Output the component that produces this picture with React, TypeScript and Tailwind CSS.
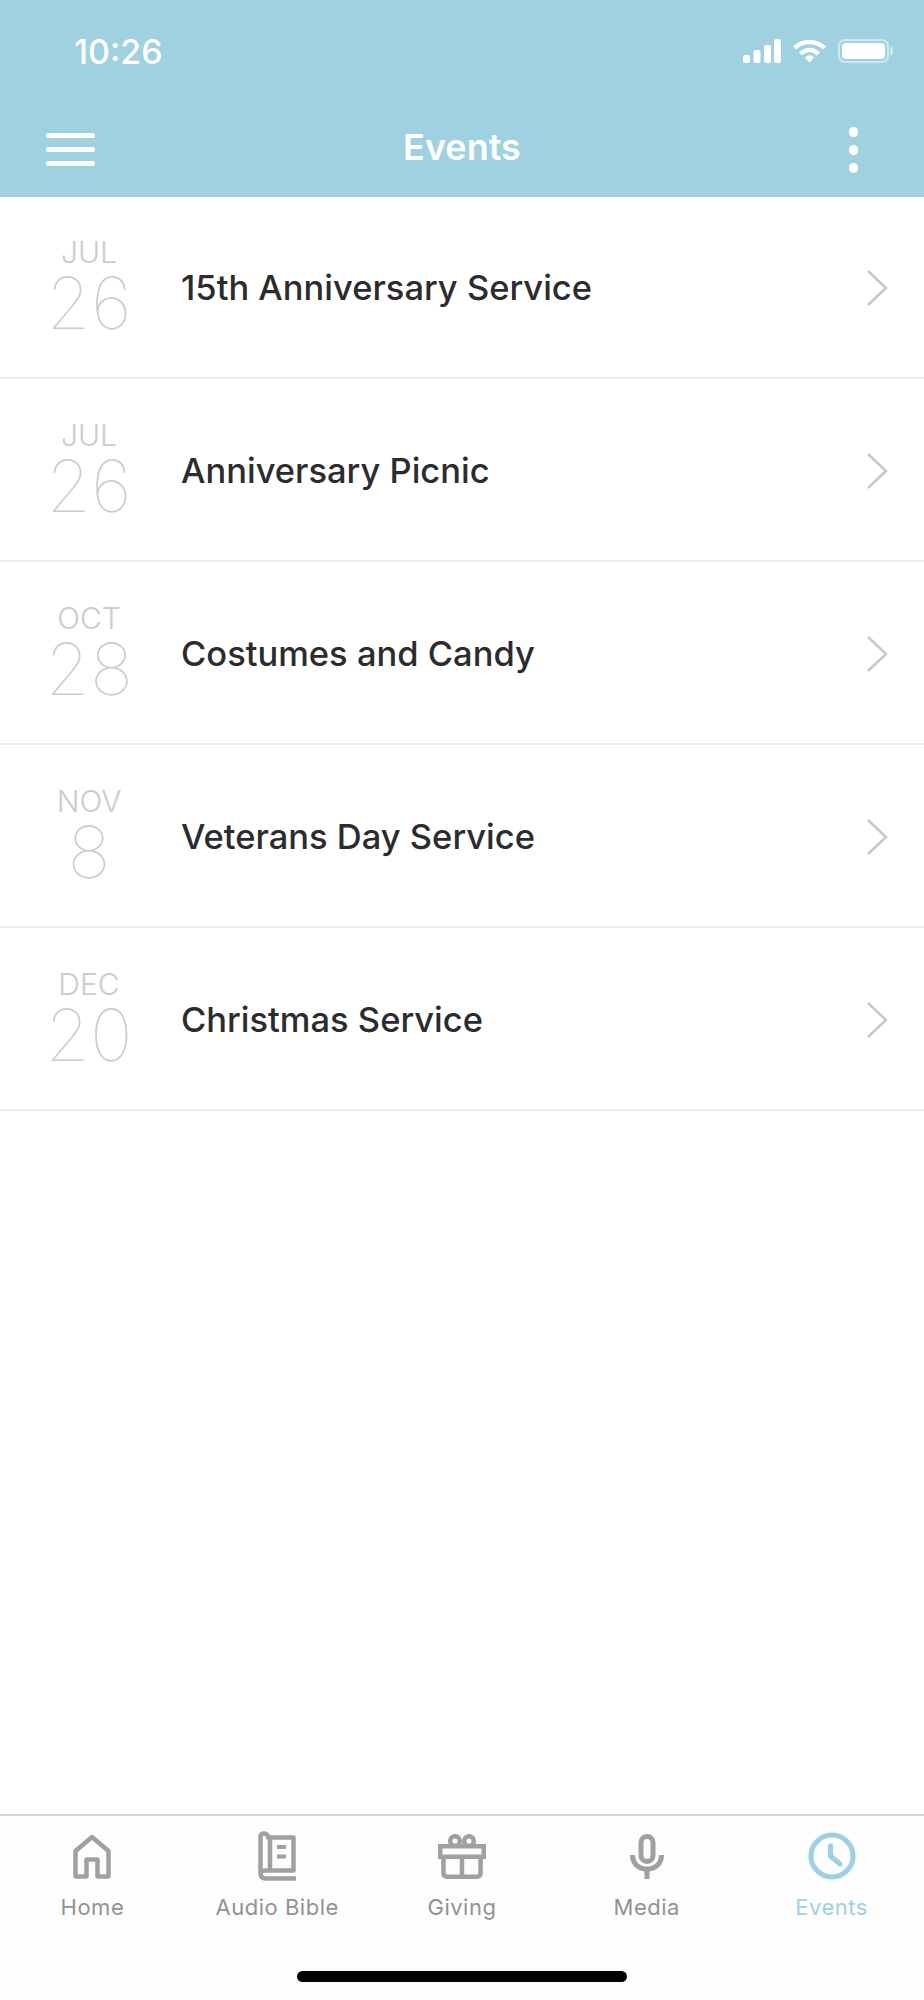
import React from 'react';

const font = { fontFamily: 'Inter, "Liberation Sans", sans-serif' };

const events = [
  { month: 'JUL', day: '26', title: '15th Anniversary Service' },
  { month: 'JUL', day: '26', title: 'Anniversary Picnic' },
  { month: 'OCT', day: '28', title: 'Costumes and Candy' },
  { month: 'NOV', day: '8', title: 'Veterans Day Service' },
  { month: 'DEC', day: '20', title: 'Christmas Service' },
];

const HomeIcon = () => (
  <svg width="38" height="45" viewBox="0 0 38 45" fill="none" stroke="currentColor" strokeWidth="4.500">
    <path d="M2.500 42.500V17L19 3L35.500 17V42.500H24.500V25.500H13.500V42.500Z" strokeLinejoin="round" />
  </svg>
);

const BookIcon = () => (
  <svg width="38" height="50" viewBox="0 0 38 50" fill="none" stroke="currentColor" strokeWidth="4.500">
    <path d="M38 47.500H8C4.500 47.500 2.500 45.500 2.500 42V6C2.500 3.500 4 2.500 6 2.500C8 2.500 10 3.500 10 6V6.500H35.500V39.500H8C4.500 39.500 2.500 41 2.500 43" strokeLinejoin="round" />
    <path d="M12 6.500V39.500" />
    <path d="M19 16H28M19 25.500H28" strokeWidth="4" />
  </svg>
);

const GiftIcon = () => (
  <svg width="48" height="45" viewBox="0 0 48 45" fill="none" stroke="currentColor" strokeWidth="4.500">
    <path d="M2.250 12.250H45.750V22.750H2.250Z" />
    <path d="M5.500 22.750V39.500C5.500 41.500 7 42.750 9 42.750H39C41 42.750 42.500 41.500 42.500 39.500V22.750" />
    <path d="M24 22.750V42.750" />
    <circle cx="17" cy="7" r="4.800" strokeWidth="4.500" />
    <circle cx="31" cy="7" r="4.800" strokeWidth="4.500" />
  </svg>
);

const MicIcon = () => (
  <svg width="34" height="45" viewBox="0 0 34 45" fill="none" stroke="currentColor" strokeWidth="5">
    <rect x="11" y="2.500" width="12" height="25" rx="6" />
    <path d="M2.500 21C2.500 29.500 8.500 35 17 35C25.500 35 31.500 29.500 31.500 21" />
    <path d="M17 35V45" />
  </svg>
);

const ClockIcon = () => (
  <svg width="48" height="48" viewBox="0 0 48 48" fill="none" stroke="currentColor" strokeWidth="5">
    <circle cx="24" cy="24" r="21" />
    <path d="M22.500 14V24L32 32" strokeLinecap="round" strokeLinejoin="round" />
  </svg>
);

const tabs = [
  { label: 'Home', icon: <HomeIcon /> },
  { label: 'Audio Bible', icon: <BookIcon /> },
  { label: 'Giving', icon: <GiftIcon /> },
  { label: 'Media', icon: <MicIcon /> },
  { label: 'Events', icon: <ClockIcon />, active: true },
];

const App: React.FC = () => {
  return (
    <div className="w-[924px] h-[2000px] flex flex-col bg-white overflow-hidden" style={font}>
      {/* Status bar + nav */}
      <div className="h-[197px] shrink-0 bg-[#a0d1e1] text-white flex flex-col">
        <div className="h-[100px] flex justify-between items-start pt-[32px] pl-[74px] pr-[31px]">
          <span className="text-[34px] leading-[40px] font-medium">10:26</span>
          <div className="flex items-center gap-[11px] pt-[7px]">
            <svg width="38" height="24" viewBox="0 0 38 24" fill="white">
              <rect x="0" y="16" width="7" height="8" rx="2" />
              <rect x="10.500" y="11" width="7" height="13" rx="2" />
              <rect x="21" y="6" width="7" height="18" rx="2" />
              <rect x="31" y="0" width="7" height="24" rx="2" />
            </svg>
            <svg width="35" height="24" viewBox="0 0 34 24" fill="none" stroke="white">
              <path d="M2 9C10.500 1 23.500 1 32 9" strokeWidth="4.500" />
              <path d="M8 15C13.500 9.500 20.500 9.500 26 15" strokeWidth="4.500" />
              <path d="M12.500 18.500C15.500 15.500 18.500 15.500 21.500 18.500L17 23.500Z" fill="white" strokeWidth="0" />
            </svg>
            <div className="flex items-center">
              <div className="w-[51px] h-[24px] rounded-[7px] border-2 border-white/50 p-[2px]">
                <div className="w-full h-full rounded-[4px] bg-white" />
              </div>
              <div className="w-[3px] h-[8px] ml-[1px] rounded-r-[2px] bg-white/50" />
            </div>
          </div>
        </div>
        <div className="relative flex-1 flex items-center justify-center pb-[4px]">
          <div className="absolute left-[46px] top-[33px] w-[49px] flex flex-col gap-[9px]">
            <div className="h-[5px] rounded-full bg-white" />
            <div className="h-[5px] rounded-full bg-white" />
            <div className="h-[5px] rounded-full bg-white" />
          </div>
          <span className="text-[36px] leading-[40px] font-semibold">Events</span>
          <div className="absolute left-[849px] top-[27px] flex flex-col gap-[8px]">
            <div className="w-[9px] h-[10px] rounded-full bg-white" />
            <div className="w-[9px] h-[10px] rounded-full bg-white" />
            <div className="w-[9px] h-[10px] rounded-full bg-white" />
          </div>
        </div>
      </div>

      {/* Event list */}
      <div className="flex-1">
        {events.map((item, i) => (
          <div key={i} className={`flex items-center border-b-2 border-[#ececee] ${i === 0 ? 'h-[182px] pt-[1px]' : 'h-[183px] pt-[3px]'}`}>
            <div className="w-[178px] shrink-0 flex flex-col items-center text-[#cbcbd1] pb-[2px]">
              <span className="text-[30px] leading-[32px] font-light">{item.month}</span>
              <span className="text-[72px] leading-[70px] font-thin">{item.day}</span>
            </div>
            <span className="ml-[3px] flex-1 text-[34.500px] font-medium text-[#2c2c2e]">{item.title}</span>
            <svg className="mr-[36px]" width="22" height="38" viewBox="0 0 22 38" fill="none" stroke="#c7c7cc" strokeWidth="2.500">
              <path d="M2 2L20 19L2 36" />
            </svg>
          </div>
        ))}
      </div>

      {/* Tab bar */}
      <div className="h-[186px] shrink-0 bg-[#fdfdfd] border-t-2 border-[#d4d4d4] flex flex-col">
        <div className="flex">
          {tabs.map((tab) => (
            <div key={tab.label} className={`flex-1 flex flex-col items-center ${tab.active ? 'text-[#9dd0e3]' : 'text-[#a0a0a0]'}`}>
              <div className="h-[64px] mt-[8px] flex items-center justify-center">{tab.icon}</div>
              <span className={`mt-[5px] text-[22px] leading-[28px] tracking-[0.5px] ${tab.active ? '' : 'text-[#929292]'}`}>{tab.label}</span>
            </div>
          ))}
        </div>
        <div className="mt-[50px] self-center w-[330px] h-[11px] rounded-full bg-black" />
      </div>
    </div>
  );
};

export default App;
